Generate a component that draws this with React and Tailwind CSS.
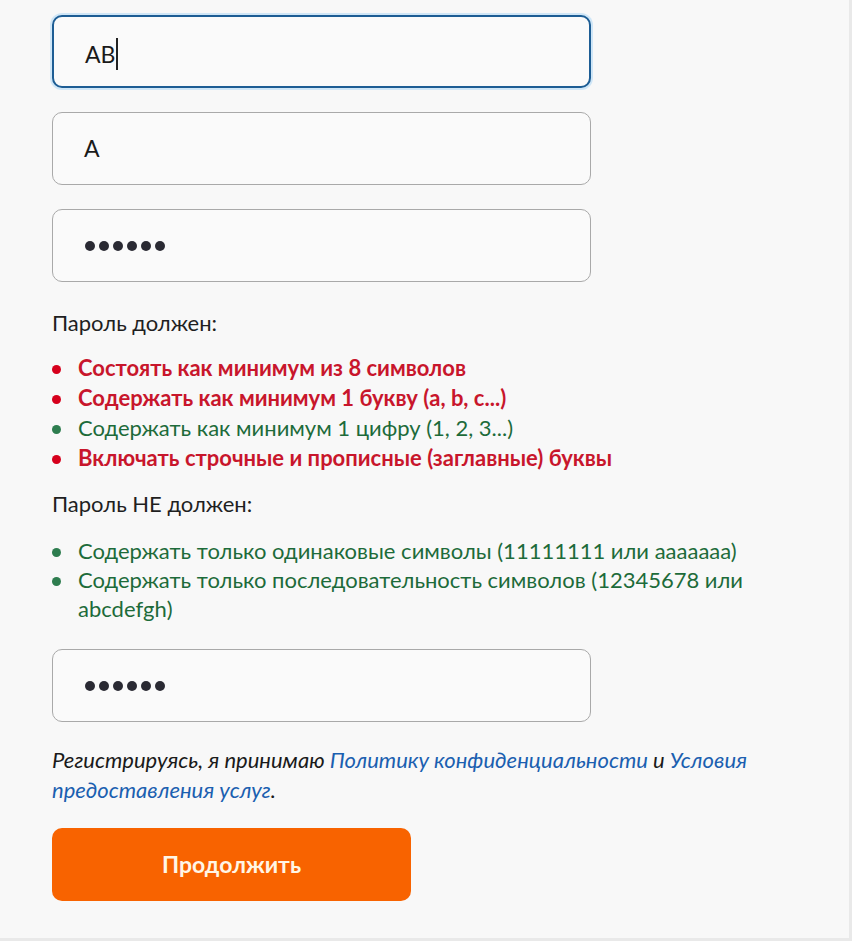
const font = { fontFamily: "Lato, 'Open Sans', sans-serif" };

function Field({ value, active, password }) {
  return (
    <div
      className={
        "flex h-[73px] w-[539px] items-center rounded-[10px] bg-[#fafafa] px-[31px] " +
        (active ? "border-2 border-[#1d5d94] shadow-[0_0_0_2px_#cfe6f7]" : "border border-[#a9a9a9]")
      }
    >
      {password ? (
        <div className="flex gap-[4px] pl-[1px]">
          {[0, 1, 2, 3, 4, 5].map((i) => (
            <span key={i} className="block h-[10px] w-[10px] rounded-full bg-[#2a2a33]" />
          ))}
        </div>
      ) : (
        <span className="text-[23px] text-[#1a1a1a]">
          {value}
          {active && <span className="ml-[1px] inline-block h-[32px] w-[2px] translate-y-[7px] bg-[#222]" />}
        </span>
      )}
    </div>
  );
}

function Rule({ ok, children }) {
  return (
    <li className="flex items-start gap-[17px]">
      <span
        className={
          "mt-[12px] block h-[9px] w-[9px] shrink-0 rounded-full " + (ok ? "bg-[#2e7d4f]" : "bg-[#d6001c]")
        }
      />
      <span className={ok ? "text-[#1d6b3a]" : "font-bold text-[#c8162c]"}>{children}</span>
    </li>
  );
}

export default function App() {
  return (
    <div className="min-h-[948px] w-[858px] bg-white" style={font}>
      <div className="h-[941px] w-[852px] border-r-[3px] border-b-[3px] border-[#e9e9e9] bg-[#f8f8f8] pl-[52px] pt-[15px]">
        <div className="flex flex-col gap-[24px]">
          <Field value="AB" active />
          <Field value="A" />
          <Field password />
        </div>

        <p className="mt-[26px] text-[22px] leading-[30px] text-[#1f1f1f]">Пароль должен:</p>
        <ul className="mt-[15px] text-[22px] leading-[30px]">
          <Rule>Состоять как минимум из 8 символов</Rule>
          <Rule>Содержать как минимум 1 букву (a, b, c...)</Rule>
          <Rule ok>Содержать как минимум 1 цифру (1, 2, 3...)</Rule>
          <Rule>Включать строчные и прописные (заглавные) буквы</Rule>
        </ul>

        <p className="mt-[16px] text-[22px] leading-[30px] text-[#1f1f1f]">Пароль НЕ должен:</p>
        <ul className="mt-[17px] w-[720px] text-[22px] leading-[29px]">
          <Rule ok>Содержать только одинаковые символы (11111111 или ааааааа)</Rule>
          <Rule ok>Содержать только последовательность символов (12345678 или abcdefgh)</Rule>
        </ul>

        <div className="mt-[26px]">
          <Field password />
        </div>

        <p className="mt-[23px] w-[715px] text-[22px] italic leading-[30px] text-[#1a1a1a]">
          Регистрируясь, я принимаю <a className="text-[#1b5fb0]">Политику конфиденциальности</a> и{" "}
          <a className="text-[#1b5fb0]">Условия предоставления услуг</a>.
        </p>

        <button className="mt-[23px] flex h-[73px] w-[359px] items-center justify-center rounded-[10px] bg-[#f86300] text-[23px] font-bold text-[#fff6e6]">
          Продолжить
        </button>
      </div>
    </div>
  );
}
